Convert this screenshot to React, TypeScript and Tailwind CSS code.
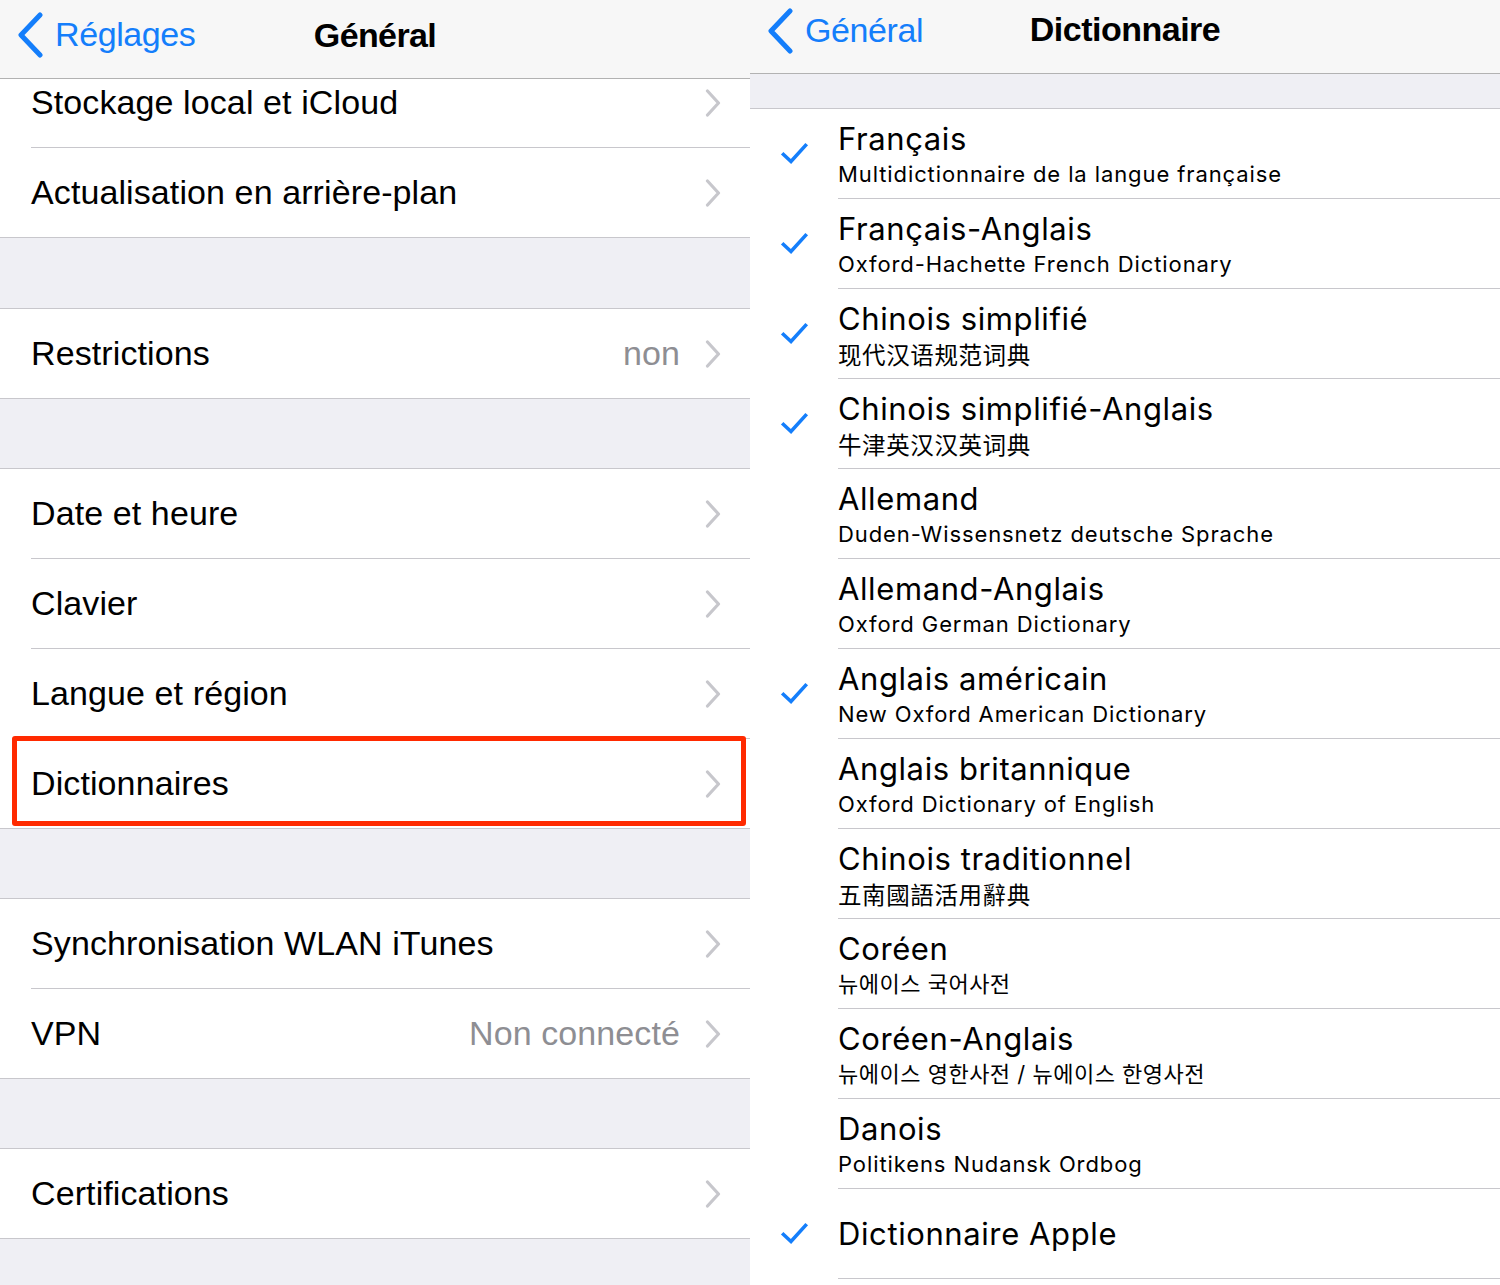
import React from "react";

const LEFT_FONT = { fontFamily: '"Liberation Sans", Arial, sans-serif' };

function Chevron() {
  return (
    <svg width="16" height="28" viewBox="0 0 16 28" className="shrink-0">
      <path d="M2.5 2 L13.5 14 L2.5 26" fill="none" stroke="#c7c7cc" strokeWidth="3.2" strokeLinecap="round" strokeLinejoin="round" />
    </svg>
  );
}

function BackChevron() {
  return (
    <svg width="28" height="46" viewBox="0 0 28 46" className="shrink-0">
      <path d="M23 3 L4 23 L23 43" fill="none" stroke="#147efb" strokeWidth="5" strokeLinecap="round" strokeLinejoin="round" />
    </svg>
  );
}

function Check() {
  return (
    <svg width="30" height="26" viewBox="0 0 30 26">
      <path d="M3.5 13.5 L11 20.5 L25.5 4.5" fill="none" stroke="#147efb" strokeWidth="3.6" strokeLinecap="square" strokeLinejoin="miter" />
    </svg>
  );
}

function Row({ label, value, h = "h-[89px]" }: { label: string; value?: string; h?: string }) {
  return (
    <div className={`${h} flex items-center pl-[31px] pr-[29px] bg-white`}>
      <span className="flex-1 text-[34px] tracking-[0.1px] text-black" style={LEFT_FONT}>{label}</span>
      {value && (
        <span className="text-[34px] tracking-[0.1px] text-[#8e8e93] mr-[25px]" style={LEFT_FONT}>{value}</span>
      )}
      <Chevron />
    </div>
  );
}

const Sep = () => <div className="h-px bg-white"><div className="ml-[31px] h-px bg-[#c8c7cc]" /></div>;
const Line = () => <div className="h-px bg-[#c8c7cc]" />;

function LeftPanel() {
  return (
    <div className="w-[750px] bg-[#efeff4] relative">
      <div className="h-[79px] bg-[#f7f7f7] border-b border-[#b2b2b2] relative flex items-center">
        <div className="flex items-center pl-[17px] gap-[10px] -mt-[9px]">
          <BackChevron />
          <span className="text-[34px] text-[#147efb] tracking-[-0.4px]" style={LEFT_FONT}>Réglages</span>
        </div>
        <div className="absolute left-0 right-0 top-0 h-[79px] flex items-center justify-center">
          <span className="text-[34px] font-bold text-black tracking-[-0.6px] -mt-[8px]" style={LEFT_FONT}>Général</span>
        </div>
      </div>
      {/* group 1 */}
      <div className="h-[68px] overflow-hidden bg-white">
        <div className="-mt-[21px]"><Row label="Stockage local et iCloud" /></div>
      </div>
      <Sep />
      <Row label="Actualisation en arrière-plan" />
      <Line />
      <div className="h-[70px]" />
      <Line />
      <Row label="Restrictions" value="non" />
      <Line />
      <div className="h-[69px]" />
      <Line />
      <Row label="Date et heure" />
      <Sep />
      <Row label="Clavier" />
      <Sep />
      <Row label="Langue et région" />
      <Sep />
      <Row label="Dictionnaires" />
      <Line />
      <div className="h-[69px]" />
      <Line />
      <Row label="Synchronisation WLAN iTunes" />
      <Sep />
      <Row label="VPN" value="Non connecté" />
      <Line />
      <div className="h-[69px]" />
      <Line />
      <Row label="Certifications" />
      <Line />
      <div className="h-[46px]" />
      <div className="absolute left-[12px] top-[736px] w-[734px] h-[90px] border-[5px] border-[#ff2a00] rounded-[3px]" />
    </div>
  );
}

type Dict = { title: string; sub?: string; checked: boolean; lang?: "sc" | "tc" | "kr" };

const DICTS: Dict[] = [
  { title: "Français", sub: "Multidictionnaire de la langue française", checked: true },
  { title: "Français-Anglais", sub: "Oxford-Hachette French Dictionary", checked: true },
  { title: "Chinois simplifié", sub: "现代汉语规范词典", checked: true, lang: "sc" },
  { title: "Chinois simplifié-Anglais", sub: "牛津英汉汉英词典", checked: true, lang: "sc" },
  { title: "Allemand", sub: "Duden-Wissensnetz deutsche Sprache", checked: false },
  { title: "Allemand-Anglais", sub: "Oxford German Dictionary", checked: false },
  { title: "Anglais américain", sub: "New Oxford American Dictionary", checked: true },
  { title: "Anglais britannique", sub: "Oxford Dictionary of English", checked: false },
  { title: "Chinois traditionnel", sub: "五南國語活用辭典", checked: false, lang: "tc" },
  { title: "Coréen", sub: "뉴에이스 국어사전", checked: false, lang: "kr" },
  { title: "Coréen-Anglais", sub: "뉴에이스 영한사전 / 뉴에이스 한영사전", checked: false, lang: "kr" },
  { title: "Danois", sub: "Politikens Nudansk Ordbog", checked: false },
  { title: "Dictionnaire Apple", checked: true },
];

const TITLE_FONT = { fontFamily: 'Inter, "Noto Sans", sans-serif' };

function Sub({ d }: { d: Dict }) {
  if (d.lang === "sc")
    return <span className="mt-[3px] text-[23.5px] leading-[28px] text-black tracking-[0.6px]" style={{ fontFamily: '"Noto Sans CJK SC", sans-serif' }}>{d.sub}</span>;
  if (d.lang === "tc")
    return <span className="mt-[3px] text-[23.5px] leading-[28px] text-black tracking-[0.6px]" style={{ fontFamily: '"Noto Sans CJK TC", sans-serif' }}>{d.sub}</span>;
  if (d.lang === "kr")
    return <span className="mt-[3px] text-[22px] leading-[28px] text-black tracking-[0.5px]" style={{ fontFamily: 'Inter, "Noto Sans CJK KR", sans-serif' }}>{d.sub}</span>;
  return <span className="mt-[3px] text-[22px] leading-[28px] text-black tracking-[0.9px]" style={{ fontFamily: 'Inter, "Noto Sans", sans-serif' }}>{d.sub}</span>;
}

function DictRow({ d }: { d: Dict }) {
  return (
    <div className="h-[89px] flex items-center">
      <div className="w-[88px] flex justify-center pl-[2px]">
        {d.checked && <Check />}
      </div>
      <div className={`flex flex-col ${d.sub ? "mt-[2px]" : ""}`}>
        <span className="text-[31px] leading-[36px] text-black tracking-[0.6px]" style={TITLE_FONT}>{d.title}</span>
        {d.sub && <Sub d={d} />}
      </div>
    </div>
  );
}

function RightPanel() {
  return (
    <div className="w-[750px] bg-white">
      <div className="h-[74px] bg-[#f7f7f7] border-b border-[#b2b2b2] relative flex items-center">
        <div className="flex items-center pl-[17px] gap-[10px] -mt-[12px]">
          <BackChevron />
          <span className="text-[34px] text-[#147efb] tracking-[-0.4px]" style={LEFT_FONT}>Général</span>
        </div>
        <div className="absolute left-0 right-0 top-0 h-[74px] flex items-center justify-center">
          <span className="text-[34px] font-bold text-black tracking-[-0.5px] -mt-[15px]" style={LEFT_FONT}>Dictionnaire</span>
        </div>
      </div>
      <div className="h-[34px] bg-[#efeff4]" />
      <Line />
      {DICTS.map((d, i) => (
        <div key={i}>
          <DictRow d={d} />
          <div className="ml-[88px] h-px bg-[#c8c7cc]" />
        </div>
      ))}
    </div>
  );
}

export default function App() {
  return (
    <div className="w-[1500px] h-[1285px] overflow-hidden flex bg-white">
      <LeftPanel />
      <RightPanel />
    </div>
  );
}
